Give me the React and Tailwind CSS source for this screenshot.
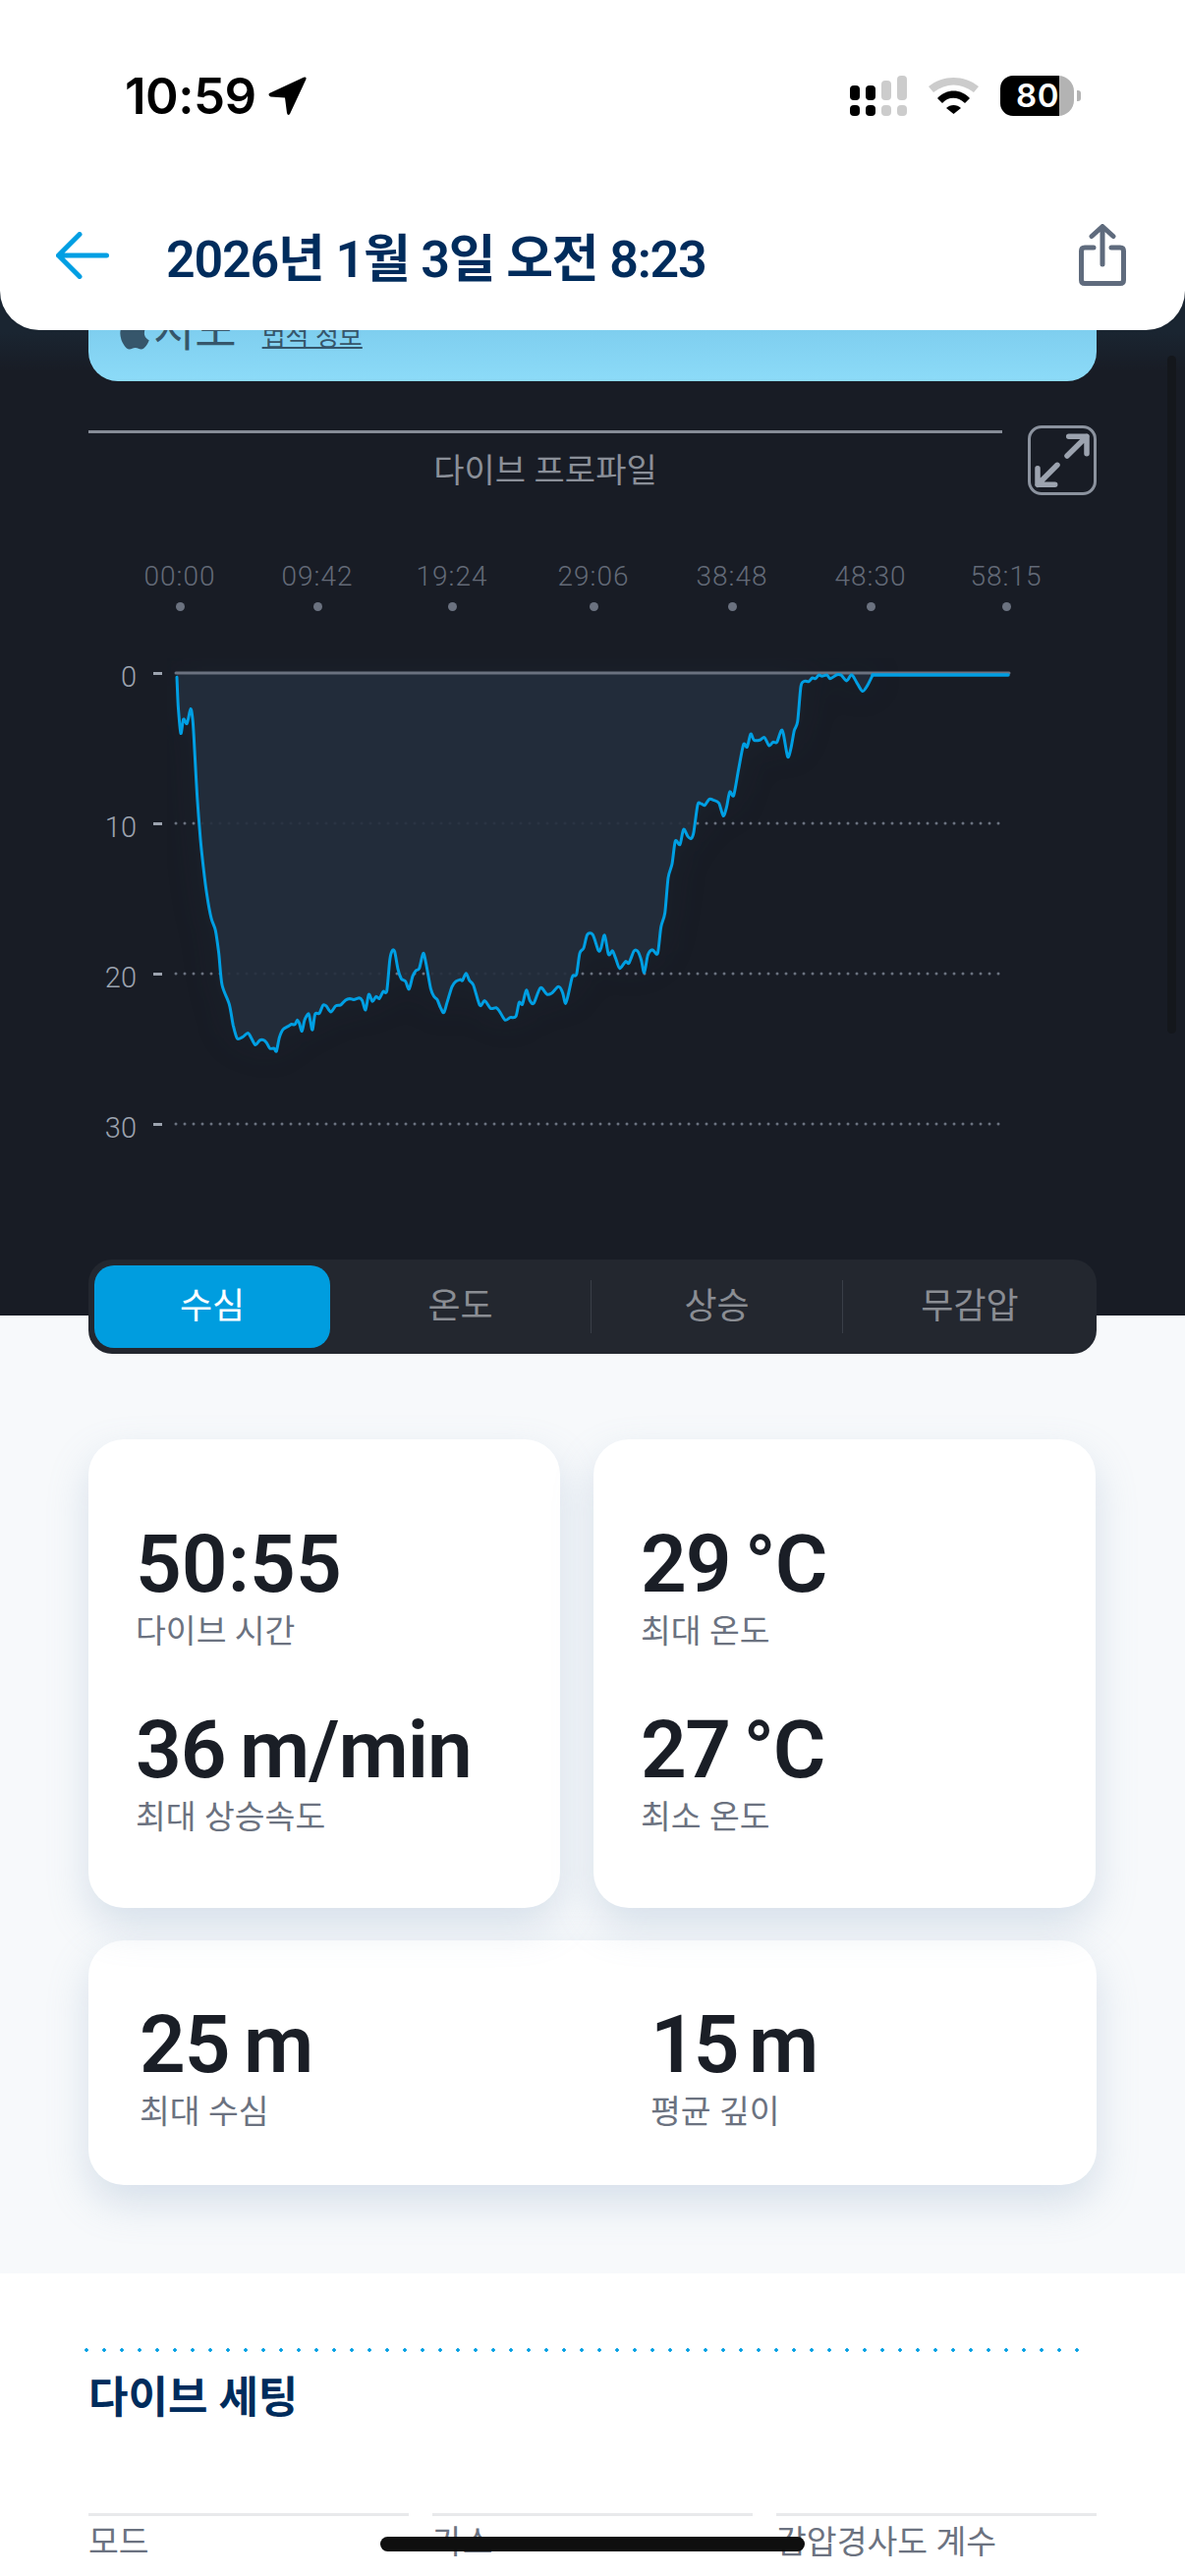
import React from "react";
import { FaApple } from "react-icons/fa";

const A = [[300,418],[304,500],[312,578],[320,538],[331,550],[342,508],[349,545],[355,640],[362,760],[372,880],[381,960],[392,1040],[405,1105],[418,1140],[428,1205],[438,1295],[460,1350],[472,1410],[484,1447],[500,1444],[517,1432],[528,1448],[540,1466],[553,1453],[565,1452],[574,1460],[584,1476],[597,1476],[604,1484],[613,1445],[624,1422],[640,1413],[650,1407],[660,1408],[668,1395],[674,1405],[682,1427],[690,1395],[702,1377],[708,1400],[714,1423],[722,1378],[735,1376],[746,1353],[756,1355],[770,1372],[785,1355],[800,1352],[815,1338],[828,1334],[840,1337],[857,1332],[866,1340],[876,1366],[886,1322],[897,1342],[908,1328],[918,1334],[930,1314],[941,1312],[950,1225],[957,1198],[965,1200],[975,1250],[985,1277],[998,1285],[1009,1307],[1020,1270],[1030,1254],[1040,1248],[1052,1205],[1060,1230],[1075,1305],[1085,1328],[1095,1337],[1105,1360],[1115,1374],[1125,1345],[1140,1300],[1152,1285],[1165,1280],[1172,1282],[1183,1262],[1193,1282],[1205,1295],[1225,1353],[1240,1340],[1258,1362],[1275,1360],[1285,1370],[1302,1395],[1318,1388],[1335,1385],[1345,1345],[1355,1350],[1367,1310],[1378,1340],[1390,1347]];
const B = [[30,1303],[50,1322],[65,1318],[85,1300],[97,1315],[107,1348],[118,1310],[128,1270],[140,1265],[150,1205],[162,1190],[173,1152],[190,1152],[207,1197],[215,1190],[226,1153],[238,1208],[250,1198],[260,1220],[272,1248],[290,1228],[300,1233],[316,1198],[328,1200],[338,1225],[347,1260],[358,1210],[372,1195],[388,1205],[398,1130],[410,1090],[420,990],[432,950],[442,885],[456,895],[467,852],[480,872],[490,878],[498,860],[510,782],[520,778],[532,783],[545,766],[558,768],[575,777],[588,813],[598,790],[608,745],[620,755],[635,680],[650,610],[661,617],[672,580],[682,597],[700,597],[714,590],[728,613],[740,603],[752,603],[765,570],[772,580],[785,645],[795,620],[805,570],[815,545],[825,445],[835,430],[850,430],[860,420],[870,422],[880,412],[890,415],[905,412],[915,422],[935,411],[948,412],[965,428],[980,411],[995,432],[1013,458],[1028,442],[1045,411]];

const pts = [
  ...A.map(([x, y]) => [80 + x / 3, 540 + y / 2.8]),
  ...B.map(([x, y]) => [540 + x / 3, 540 + y / 2.8]),
];

function smooth(points) {
  let d = `M${points[0][0].toFixed(1)} ${points[0][1].toFixed(1)}`;
  for (let i = 0; i < points.length - 1; i++) {
    const p0 = points[Math.max(i - 1, 0)];
    const p1 = points[i];
    const p2 = points[i + 1];
    const p3 = points[Math.min(i + 2, points.length - 1)];
    const t = 0.14;
    const c1x = p1[0] + (p2[0] - p0[0]) * t;
    const c1y = p1[1] + (p2[1] - p0[1]) * t;
    const c2x = p2[0] - (p3[0] - p1[0]) * t;
    const c2y = p2[1] - (p3[1] - p1[1]) * t;
    d += `C${c1x.toFixed(1)} ${c1y.toFixed(1)} ${c2x.toFixed(1)} ${c2y.toFixed(1)} ${p2[0].toFixed(1)} ${p2[1].toFixed(1)}`;
  }
  return d;
}

const curve = smooth(pts);
const area = `${curve}L888 685L180 685Z`;

const times = ["00:00", "09:42", "19:24", "29:06", "38:48", "48:30", "58:15"];

function Chart() {
  return (
    <svg width="860" height="480" viewBox="170 670 860 480" className="shrink-0">
      <defs>
        <filter id="glow" x="-20%" y="-20%" width="140%" height="140%">
          <feGaussianBlur stdDeviation="18" />
        </filter>
      </defs>
      <path d={area} fill="#232d3b" opacity="0.3" filter="url(#glow)" />
      {[838, 991, 1144].map((y) => (
        <line key={y} x1="179" x2="1018" y1={y} y2={y} stroke="#6b7280" strokeWidth="3" strokeLinecap="round" strokeDasharray="0 9" />
      ))}
      <path d={area} fill="#232e3c" fillOpacity="0.9" />
      <line x1="179" x2="1027" y1="685" y2="685" stroke="#6b7280" strokeWidth="3" strokeLinecap="round" />
      <path d={curve} fill="none" stroke="#009fe3" strokeWidth="3" strokeLinejoin="round" strokeLinecap="round" />
      <line x1="888" x2="1026" y1="687" y2="687" stroke="#009fe3" strokeWidth="3.5" strokeLinecap="round" />
    </svg>
  );
}

function Stat({ value, label, className = "", valueClass = "tracking-[-1px]" }) {
  return (
    <div className={className}>
      <div className={`text-[82px] leading-[90px] font-semibold text-[#1a1e26] whitespace-nowrap [word-spacing:-5px] ${valueClass}`}>{value}</div>
      <div className="mt-[4px] text-[33.5px] leading-[40px] text-[#6b7280] whitespace-nowrap">{label}</div>
    </div>
  );
}

function SettingHead({ children }) {
  return (
    <div className="border-t-[3px] border-[#e8e9eb] pt-[7px] text-[33.5px] leading-[40px] text-[#6b7280] whitespace-nowrap">
      {children}
    </div>
  );
}

export default function App() {
  return (
    <div className="relative w-[1206px] h-[2622px] overflow-hidden bg-white font-['Roboto','Noto_Sans_CJK_KR',sans-serif]">
      {/* header */}
      <header className="relative z-10 h-[336px] bg-white rounded-b-[40px]">
        <div className="flex items-center justify-between h-[41px] pt-0 translate-y-[77px] pl-[127px] pr-[106px]">
          <div className="flex items-center">
            <span className="font-['Inter',sans-serif] text-[51px] leading-[41px] font-semibold text-black tracking-[-0.5px]">10:59</span>
            <svg width="39" height="40" viewBox="0 0 39 40" className="ml-[12px]">
              <path d="M1 17L36 .7Q39.5 0 38.3 3L22 38Q20 40.5 19 37L17 21.5L2.5 20.5Q-.5 19 1 17Z" fill="#000" />
            </svg>
          </div>
          <div className="flex items-center">
            <svg width="58" height="41" viewBox="0 0 58 41">
              <rect x="0" y="10" width="10" height="15" rx="4" fill="#000" />
              <rect x="16" y="10" width="10" height="15" rx="4" fill="#000" />
              <rect x="32" y="5" width="10" height="20" rx="4" fill="#ccc" />
              <rect x="48" y="0" width="10" height="25" rx="4" fill="#ccc" />
              <rect x="0" y="30" width="10" height="11" rx="4" fill="#000" />
              <rect x="16" y="30" width="10" height="11" rx="4" fill="#000" />
              <rect x="32" y="30" width="10" height="11" rx="4" fill="#ccc" />
              <rect x="48" y="30" width="10" height="11" rx="4" fill="#ccc" />
            </svg>
            <svg width="51" height="37" viewBox="0 0 51 37" className="ml-[22px]">
              <path d="M0 9C15-3 36-3 51 9L46 15C33 5 18 5 5 15Z" fill="#ccc" />
              <path d="M9 21C18 11 33 11 42 21L37 26C30 19 20 19 14 26Z" fill="#000" />
              <path d="M18 31C22 27 29 27 33 31L25.5 37Z" fill="#000" />
            </svg>
            <div className="ml-[22px] flex h-[41px] w-[75px] overflow-hidden rounded-l-[13px] rounded-r-[16px]">
              <div className="w-[60px] bg-black flex items-center justify-end text-white font-['Inter',sans-serif] font-semibold text-[33px] leading-none tracking-[0.5px]">80</div>
              <div className="flex-1 bg-[#b3b3b3]" />
            </div>
            <div className="ml-[3px] w-[4px] h-[11px] rounded-r-[3px] bg-[#b3b3b3]" />
          </div>
        </div>
        <div className="flex items-center pl-[57px] pr-[60px] translate-y-[187px] h-[63px]">
          <svg width="54" height="48" viewBox="0 0 54 48" fill="none" stroke="#009fe3" strokeWidth="5" strokeLinecap="round" strokeLinejoin="round">
            <path d="M2.5 24H51.5M24 2.5L2.5 24L24 45.5" />
          </svg>
          <h1 className="ml-[58px] pt-[10px] text-[52px] leading-[63px] font-semibold text-[#002c5c] whitespace-nowrap tracking-[-1.2px]">2026년 1월 3일 오전 8:23</h1>
          <svg width="48" height="63" viewBox="0 0 48 63" fill="none" stroke="#5f6b7d" strokeWidth="5" strokeLinecap="round" strokeLinejoin="round" className="ml-auto">
            <path d="M15 24H6Q2.5 24 2.5 27.5V57Q2.5 60.5 6 60.5H42Q45.5 60.5 45.5 57V27.5Q45.5 24 42 24H33" />
            <path d="M24 41V3M13 12.5L24 2.5L35 12.5" />
          </svg>
        </div>
      </header>

      {/* dark section */}
      <section className="relative flow-root -mt-[48px] pt-[7px] bg-[linear-gradient(#1a2531_50px,#181c25_90px)]">
        <div className="absolute right-[9px] top-[74px] w-[9px] h-[690px] rounded-full bg-[#14171c]" />
        <div className="mx-[90px] h-[93px] rounded-[30px] bg-gradient-to-b from-[#74c4e8] to-[#8cdbf8] flex items-end pl-[30px] pb-[30px] overflow-hidden">
          <FaApple className="text-[#36566b] w-[34px] h-[40px] shrink-0" />
          <span className="ml-[2px] text-[46px] leading-[50px] -mb-[3px] text-[#36566b]">지도</span>
          <span className="ml-[26px] text-[26px] leading-[30px] text-[#36566b] underline decoration-2">법적 정보</span>
        </div>

        <div className="flex mx-[90px] mt-[45px]">
          <div className="w-[930px] pt-[5px]">
            <div className="h-[3px] bg-[#868c97]" />
            <div className="mt-[16px] text-center text-[34px] leading-[44px] text-[#8a8f98] whitespace-nowrap">다이브 프로파일</div>
          </div>
          <button className="ml-auto w-[70px] h-[71px] border-[3px] border-[#8b929e] rounded-[14px] flex items-center justify-center">
            <svg width="64" height="65" viewBox="3 3 64 65" fill="none" stroke="#9ca3af" strokeWidth="5.5" strokeLinecap="round" strokeLinejoin="round">
              <path d="M41.7 11.3H60V28.7M60 11.3L40 31" />
              <path d="M10 43.7V60.3H27.7M10 60.3L30 40.3" />
            </svg>
          </button>
        </div>

        {/* time axis */}
        <div className="ml-[183px] mt-[66px] grid grid-cols-[140px_137px_144px_141px_141px_138px_1px]">
          {times.map((t) => (
            <div key={t} className="w-0 flex flex-col items-center">
              <span className="text-[28px] leading-[34px] font-light tracking-[1px] text-[#636a77] whitespace-nowrap">{t}</span>
              <span className="mt-[9px] w-[9px] h-[9px] shrink-0 rounded-full bg-[#6b7280]" />
            </div>
          ))}
        </div>

        {/* chart */}
        <div className="flex mt-[48px]">
          <div className="w-[170px] shrink-0">
            {[0, 10, 20, 30].map((n) => (
              <div key={n} className="flex items-center justify-end h-[30px] mb-[123px] pr-[5px]">
                <span className="pt-[7px] text-[29px] leading-[30px] font-light text-[#9ca3af]">{n}</span>
                <span className="ml-[17px] w-[9px] h-[3px] bg-[#9ca3af]" />
              </div>
            ))}
          </div>
          <Chart />
        </div>

        {/* segment */}
        <div className="relative z-10 mx-[90px] -mb-[39px] h-[96px] rounded-[24px] bg-[#23272f] flex items-center pl-[6px] pr-0">
          <div className="w-[240px] h-[84px] rounded-[20px] bg-[#009ddf] flex items-center justify-center text-[36px] text-white">수심</div>
          <div className="w-[265px] flex items-center justify-center text-[36px] text-[#8a8d93] ml-0">온도</div>
          <div className="w-px h-[54px] bg-[#3a3f48]" />
          <div className="w-[255px] flex items-center justify-center text-[36px] text-[#8a8d93]">상승</div>
          <div className="w-px h-[54px] bg-[#3a3f48]" />
          <div className="flex-1 flex items-center justify-center text-[36px] text-[#8a8d93]">무감압</div>
        </div>
      </section>

      {/* stats */}
      <section className="bg-[#f7f9fb] pt-[126px] pb-[90px] px-[90px]">
        <div className="grid grid-cols-[480px_511px] gap-[34px]">
          <div className="h-[477px] rounded-[36px] bg-white shadow-[0_18px_40px_rgba(140,165,195,0.3)] pt-[82px] pl-[48px]">
            <Stat value="50:55" label="다이브 시간" valueClass="tracking-[0px]" />
            <Stat value="36 m/min" label="최대 상승속도" className="mt-[55px]" />
          </div>
          <div className="h-[477px] rounded-[36px] bg-white shadow-[0_18px_40px_rgba(140,165,195,0.3)] pt-[82px] pl-[48px]">
            <Stat value="29 °C" label="최대 온도" />
            <Stat value="27 °C" label="최소 온도" className="mt-[55px]" valueClass="tracking-[-1.5px]" />
          </div>
        </div>
        <div className="mt-[33px] h-[249px] rounded-[36px] bg-white shadow-[0_18px_40px_rgba(140,165,195,0.3)] pt-[61px] pl-[52px] grid grid-cols-[520px_1fr]">
          <Stat value="25 m" label="최대 수심" />
          <Stat value="15 m" label="평균 깊이" valueClass="tracking-[-3px]" />
        </div>
      </section>

      {/* settings */}
      <section className="px-[90px] pt-[76px]">
        <div className="h-[4px] -ml-[11px] w-[1030px] bg-[radial-gradient(circle,#009fe3_1.5px,transparent_2px)] bg-[length:18px_4px]" />
        <h2 className="mt-[22px] text-[44px] leading-[50px] font-semibold text-[#002c5c] whitespace-nowrap">다이브 세팅</h2>
        <div className="mt-[92px] grid grid-cols-3 gap-[24px]">
          <SettingHead>모드</SettingHead>
          <SettingHead>가스</SettingHead>
          <SettingHead>감압경사도 계수</SettingHead>
        </div>
      </section>

      {/* home indicator */}
      <div className="absolute left-[387px] top-[2582px] w-[432px] h-[15px] rounded-full bg-[#0f0f0f]" />
    </div>
  );
}
